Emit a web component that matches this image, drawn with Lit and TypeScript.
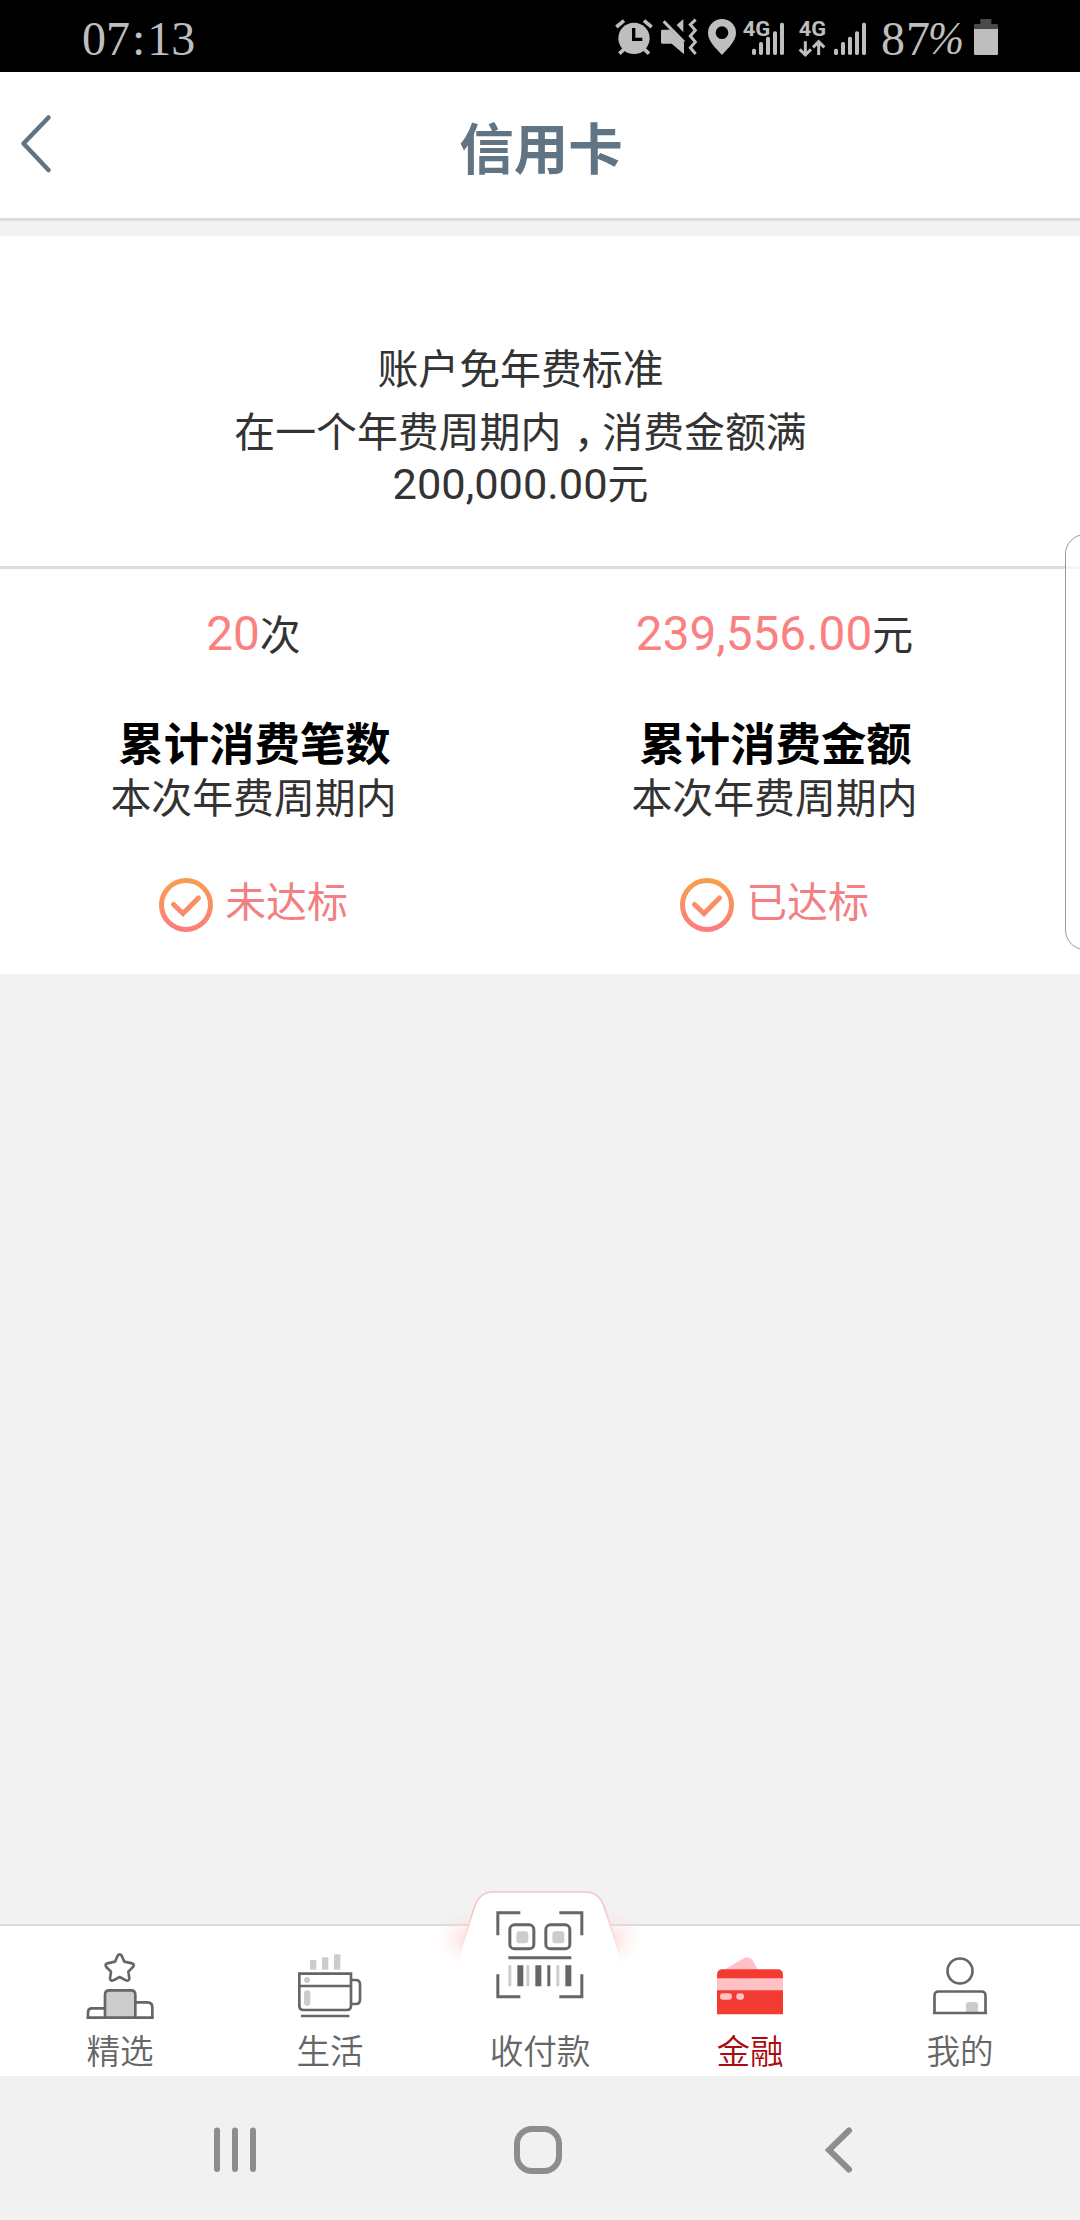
import { LitElement, html, css, svg } from "lit";
import { customElement, property } from "lit/decorators.js";

const CJK = css`"Noto Sans CJK SC", "Liberation Sans", sans-serif`;

@customElement("status-bar")
class StatusBar extends LitElement {
  static styles = css`
    :host { display: block; }
    .bar { display: flex; justify-content: space-between; height: 72px; background: #000; color: #bebebe;
      font: 48px/72px "Liberation Serif", serif; padding: 0 78px 0 82px; box-sizing: border-box; }
    .time { display: flex; height: 72px; padding-top: 3px; }
    .colon { padding: 0 2px; }
    .right { display: flex; height: 72px; }
    .pct { width: 98px; padding: 3px 0 0 9px; box-sizing: border-box; white-space: nowrap; display: flex; letter-spacing: 1px; }
    .sign { font-style: italic; font-size: 46px; margin-left: -3px; display: inline-block; transform: scaleX(0.94); transform-origin: left; }
    svg { display: block; height: 72px; fill: #bebebe; stroke: none; }
    .g { font: bold 59px Roboto, sans-serif; }
    .ln { fill: none; stroke: #bebebe; }
    .cut { fill: none; stroke: #000; }
  `;
  render() {
    const bars = (x: number) => [146, 126, 110, 94, 68].map((y, i) =>
      svg`<rect x=${x + i * 21} y=${y} width="12" height=${165 - y} rx="5"/>`);
    return html`<div class="bar">
      <div class="time"><span>07</span><span class="colon">:</span><span>13</span></div>
      <div class="right">
        <svg width="41" viewBox="42 0 123 216">
          <circle cx="102" cy="115" r="47"/>
          <path class="ln" stroke-width="11" d="M49 81L72 62M155 81L132 62M58 161L74 146M147 161L131 146"/>
          <path class="cut" stroke-width="10" d="M101 84V118H127"/>
        </svg>
        <svg width="47" viewBox="165 0 141 216">
          <path d="M183 93q0-4 4-4h23l42 40v34L215 131H187q-4 0-4-4zM230 75L250 57V97z"/>
          <path class="ln" stroke-width="9" d="M191 64L252 126"/>
          <path class="ln" stroke-width="9" d="M287 59L271 74L286 91L271 108L286 126L271 143L287 162"/>
        </svg>
        <svg width="38" viewBox="306 0 114 216">
          <path fill-rule="evenodd" d="M366 57a42 42 0 0 1 42 42c0 24-22 44-42 66c-20-22-42-42-42-66a42 42 0 0 1 42-42zm0 22a19 19 0 1 0 0 38a19 19 0 1 0 0-38z"/>
        </svg>
        <svg width="52" viewBox="420 0 156 216">
          ${bars(456)}
          <text class="g" x="428" y="107" textLength="83" lengthAdjust="spacingAndGlyphs">4G</text>
        </svg>
        <svg width="80" viewBox="576 0 240 216">
          <text class="g" x="596" y="107" textLength="82" lengthAdjust="spacingAndGlyphs">4G</text>
          <path class="ln" stroke-width="9" d="M616 124V164M599 148L616 165L633 148M656 165V126M639 142L656 125L673 142"/>
          ${bars(702)}
        </svg>
        <div class="pct"><span>87</span><span class="sign">%</span></div>
        <svg width="32" viewBox="1110 0 96 216">
          <path fill="#4a4a4a" d="M1122 88V76q0-4 4-4h15V57h33V72h16q4 0 4 4V88z"/>
          <path d="M1122 87H1194V161q0 4-4 4H1126q-4 0-4-4z"/>
        </svg>
      </div>
    </div>`;
  }
}

@customElement("stat-column")
class StatColumn extends LitElement {
  @property() value = "";
  @property() unit = "";
  @property() label = "";
  @property() status = "";
  static styles = css`
    :host { display: flex; flex-direction: column; align-items: center; color: #333;
      font: 40.9px/52px "Liberation Sans", "Noto Sans CJK SC", sans-serif; padding: 37px 0 42px; white-space: nowrap; }
    .value { line-height: 60px; height: 60px; }
    .num { font-family: Roboto, sans-serif; font-size: 47.7px; line-height: 1; color: #fb8080; }
    .label { margin-top: 52px; font-size: 45.4px; line-height: 56px; height: 55px; font-weight: 700; color: #000; padding-left: 2px; }
    .status { display: flex; gap: 12px; margin-top: 53px; height: 54px; line-height: 50px; color: #f28083; }
  `;
  render() {
    return html`
      <div class="value"><span class="num">${this.value}</span>${this.unit}</div>
      <div class="label">${this.label}</div>
      <div>本次年费周期内</div>
      <div class="status">
        <svg width="54" height="54" viewBox="0 0 54 54" fill="none">
          <defs><linearGradient id="g" gradientUnits="userSpaceOnUse" x1="0" y1="0" x2="0" y2="54">
            <stop offset="0.1" stop-color="#f89d4f"/><stop offset="1" stop-color="#fd7b80"/></linearGradient></defs>
          <circle cx="27" cy="27" r="24.5" stroke="url(#g)" stroke-width="5"/>
          <path d="M14.5 26.500L24 35.500L39.500 20" stroke="url(#g)" stroke-width="5" stroke-linecap="round"/>
        </svg>
        <span>${this.status}</span>
      </div>`;
  }
}

const icons = {
  featured: svg`<svg width="70" height="72" viewBox="76 240 210 216" fill="none" stroke="#666" stroke-width="8">
    <path stroke-linejoin="round" d="M174 257Q180 249 186 257L194 275L217 280Q226 283 220 291L206 305L209 325Q208 334 199 331L180 321L161 331Q152 334 151 325L154 305L140 291Q134 283 143 280L166 275Z"/>
    <path d="M85 443V427Q85 415 97 415H135M229 397H263Q278 397 278 412V443"/>
    <path fill="#ccc" d="M136 443V374Q136 361 149 361H214Q227 361 227 374V443"/>
    <path d="M81 443H282"/></svg>`,
  life: svg`<svg width="70" height="72" viewBox="706 240 210 216" fill="none" stroke="#666" stroke-width="8">
    <g fill="#ccc" stroke="none"><rect x="751" y="270" width="19" height="29"/><rect x="787" y="262" width="19" height="37"/><rect x="823" y="253" width="19" height="46"/>
    <circle cx="742" cy="330" r="9"/><rect x="733" y="361" width="19" height="46" rx="9"/></g>
    <path d="M719 311H874V407Q874 420 861 420H732Q719 420 719 407ZM719 348H874M876 330H888Q901 330 901 343V389Q901 402 888 402H876M724 438H869"/></svg>`,
  pay: svg`<svg width="88" height="88" viewBox="197 122 264 264" fill="none" stroke="#666" stroke-width="9">
    <path d="M202.500 195V127.500H270M387 127.500H454.500V195M202.500 312V379.500H270M387 379.500H454.500V312M234 262.500H423"/>
    <rect x="238.500" y="163.500" width="72" height="72" rx="14"/><rect x="346.500" y="163.500" width="72" height="72" rx="14"/>
    <g stroke="none" fill="#ccc"><rect x="258" y="183" width="36" height="36" rx="9"/><rect x="366" y="183" width="36" height="36" rx="9"/>
    <path d="M234 285h9v63h-9zM288 285h9v63h-9zM378 285h9v63h-9z"/>
    <path fill="#666" d="M261 285h18v63h-18zM315 285h18v63h-18zM351 285h9v63h-9zM405 285h18v63h-18z"/></g></svg>`,
  finance: svg`<svg width="70" height="72" viewBox="105 150 210 216">
    <path fill="#ffc1c3" d="M130 211L193 174Q208 167 217 180L235 211Z"/>
    <path fill="#f33b33" d="M111 343V225Q111 208 128 208H292Q309 208 309 225V343Z"/>
    <path fill="#ffc1c3" d="M111 235H309V271H111Z"/>
    <rect x="120" y="280" width="36" height="19" rx="9" fill="#ffc1c3"/><rect x="169" y="280" width="23" height="19" rx="9" fill="#ffc1c3"/></svg>`,
  mine: svg`<svg width="70" height="72" viewBox="735 150 210 216" fill="none" stroke="#666" stroke-width="8">
    <circle cx="840" cy="213" r="37.500"/>
    <path fill="#ccc" stroke="none" d="M858 336V315q0-9 9-9h18q9 0 9 9v21z"/>
    <path d="M763.500 339V287Q763.500 274.500 776 274.500H904Q916.500 274.500 916.500 287V339ZM759 339H921"/></svg>`,
};

@customElement("tab-bar")
class TabBar extends LitElement {
  static styles = css`
    :host { display: block; position: relative; }
    .bar { display: grid; grid-template-columns: repeat(5, 210px); justify-content: center; height: 152px;
      border-top: 2px solid #dcdcdc; background: #fff; box-sizing: border-box; }
    .tab { position: relative; display: flex; flex-direction: column; align-items: center; justify-content: flex-end;
      color: #666; font: 350 33.6px/46px ${CJK}; white-space: nowrap; padding-bottom: 3px; }
    .tab svg { display: block; margin-bottom: 5px; }
    .tab.pay svg { margin-bottom: 28px; margin-right: 1px; }
    .tab.active { color: #a90b10; }
    .bump { position: absolute; left: 430px; top: -54px; }
    .over { position: absolute; left: 435px; bottom: 0; width: 210px; }
  `;
  render() {
    return html`<div class="bar">
      <div class="tab">${icons.featured}<span>精选</span></div>
      <div class="tab">${icons.life}<span>生活</span></div>
      <div class="tab"></div>
      <div class="tab active">${icons.finance}<span>金融</span></div>
      <div class="tab">${icons.mine}<span>我的</span></div>
    </div>
    <svg class="bump" width="220" height="120" viewBox="0 0 660 360">
      <defs>
        <radialGradient id="l"><stop offset="0" stop-color="#ffc0c0" stop-opacity="0.6"/><stop offset="0.5" stop-color="#ffcccc" stop-opacity="0.22"/><stop offset="1" stop-color="#ffd8d8" stop-opacity="0"/></radialGradient>
        <linearGradient id="s" x1="0" y1="0" x2="0" y2="1"><stop offset="0.3" stop-color="#f6c5c5"/><stop offset="0.95" stop-color="#ffecec"/></linearGradient>
      </defs>
      <ellipse cx="116" cy="206" rx="100" ry="88" fill="url(#l)"/>
      <ellipse cx="541" cy="206" rx="100" ry="88" fill="url(#l)"/>
      <path fill="#fff" d="M91 244L133 112Q148 66 188 66H468Q508 66 523 112L566 244Q569 272 552 300L540 360H118L105 300Q90 272 91 244Z"/>
      <path fill="none" stroke="url(#s)" stroke-width="5" d="M91 252V244L133 112Q148 66 188 66H468Q508 66 523 112L566 244V252"/>
    </svg>
    <div class="over"><div class="tab pay">${icons.pay}<span>收付款</span></div></div>`;
  }
}

@customElement("app-root")
class AppRoot extends LitElement {
  static styles = css`
    :host { display: block; }
    .page { position: relative; display: flex; flex-direction: column; width: 1080px; height: 2220px; overflow: hidden;
      background: #f2f2f2; font-family: ${CJK}; }
    .header { display: grid; grid-template-columns: 60px 1fr 60px; height: 149px; box-sizing: border-box; background: #fff;
      border-bottom: 3px solid #d5dfe3; color: #617484; }
    .back { padding: 41px 0 0 19px; }
    .title { margin: 0; text-align: center; font-size: 54.5px; line-height: 146px; font-weight: 700; padding: 1px 0 0 2px; height: 146px; }
    .card { margin-top: 15px; background: #fff; }
    .summary { box-sizing: border-box; height: 333px; padding: 104px 39px 0 0; border-bottom: 3px solid #dcdcdc;
      text-align: center; font-family: "Liberation Sans", "Noto Sans CJK SC", sans-serif; font-size: 40.9px; color: #333; }
    .l1 { line-height: 60px; }
    .l2 { line-height: 56px; margin-top: 5px; }
    .l3 { line-height: 50px; height: 50px; margin-top: -1px; }
    .comma { font-feature-settings: "halt"; margin: 0 8px 0 12.400px; }
    .num { font-family: Roboto, sans-serif; font-size: 43.4px; line-height: 1; }
    .stats { display: grid; grid-template-columns: 507px 535px; }
    .edge { position: absolute; left: 1065px; top: 534px; width: 40px; height: 416px; box-sizing: border-box;
      border: 1px solid #999; border-radius: 20px; background: rgba(255, 255, 255, 0.75); }
    tab-bar { margin-top: auto; }
    .nav { height: 144px; background: #f1f1f1; display: flex; justify-content: space-between; align-items: center;
      padding: 4px 226px 0 212px; box-sizing: border-box; }
    .nav svg, .back svg { display: block; fill: none; stroke: #8d8d8d; stroke-width: 6; stroke-linecap: round; }
    .nav .home { margin-right: 6px; }
    .back svg { stroke: #617484; stroke-width: 4.500; stroke-linejoin: round; }
  `;
  render() {
    return html`<div class="page">
      <status-bar></status-bar>
      <div class="header">
        <div class="back"><svg width="36" height="62" viewBox="0 0 36 62"><path d="M29.500 4.500L4.500 30.500L29.500 57"/></svg></div>
        <h1 class="title">信用卡</h1>
      </div>
      <div class="card">
        <div class="summary">
          <div class="l1">账户免年费标准</div>
          <div class="l2">在一个年费周期内<span class="comma">，</span>消费金额满</div>
          <div class="l3"><span class="num">200,000.00</span>元</div>
        </div>
        <div class="stats">
          <stat-column value="20" unit="次" label="累计消费笔数" status="未达标"></stat-column>
          <stat-column value="239,556.00" unit="元" label="累计消费金额" status="已达标"></stat-column>
        </div>
      </div>
      <div class="edge"></div>
      <tab-bar></tab-bar>
      <div class="nav">
        <svg width="46" height="50" viewBox="0 0 46 50"><path d="M5 5.500V44M23 5.500V44M41 5.500V44"/></svg>
        <svg class="home" width="52" height="52" viewBox="0 0 52 52"><rect x="5" y="5" width="42" height="42" rx="15"/></svg>
        <svg width="30" height="50" viewBox="0 0 30 50"><path d="M25 5.500L5 25L25 44.500"/></svg>
      </div>
    </div>`;
  }
}
